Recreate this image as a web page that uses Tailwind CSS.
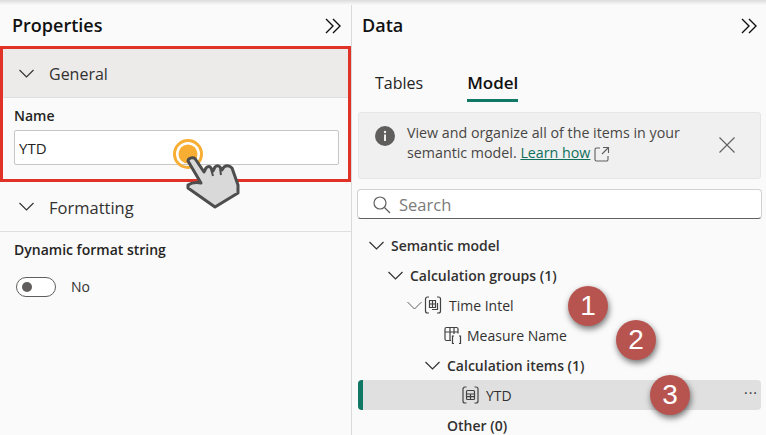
<!DOCTYPE html>
<html lang="en">
  <head>
    <meta charset="UTF-8" />
    <meta name="viewport" content="width=device-width, initial-scale=1.0" />
    <title>Properties and Data panes</title>
    <script src="https://cdn.jsdelivr.net/npm/@tailwindcss/browser@4"></script>
  </head>
  <body class="relative h-[435px] w-[766px] overflow-hidden bg-[#fafafa] font-['Open_Sans','Liberation_Sans',sans-serif] text-[#252423]">
    <!-- top window shadow -->
    <div class="absolute inset-x-0 top-0 h-[5px] bg-gradient-to-b from-[#dcdcdc] to-[#fafafa]"></div>

    <div class="flex h-full">
      <!-- Properties pane -->
      <aside class="h-full w-[352px] shrink-0 border-r border-[#d9d9d9]">
        <header class="flex h-[46px] items-end justify-between pb-[9px] pl-3 pr-[10px]">
          <h2 class="text-[18px] leading-6 font-semibold text-[#111]">Properties</h2>
          <svg class="mb-[3px]" width="16" height="16" viewBox="0 0 16 16" fill="none" stroke="#111" stroke-width="1.4"><path d="M1 1l7 7-7 7M8 1l7 7-7 7"/></svg>
        </header>

        <section class="h-[136px] border-[3px] border-[#e03226]">
          <div class="flex h-[49px] items-center gap-[15px] border-b border-[#e1dfdd] bg-[#edebe9] pl-4">
            <svg width="15" height="9" viewBox="0 0 15 9" fill="none" stroke="#323130" stroke-width="1.1"><path d="M.5 1l7 7 7-7"/></svg>
            <span class="pt-[1px] text-[16px] leading-6 text-[#323130]">General</span>
          </div>
          <div class="px-[11px] pt-[8px]">
            <label class="block text-[14px] leading-[19px] font-semibold text-[#252423]">Name</label>
            <input value="YTD" class="mt-[5px] block h-[35px] w-[325px] rounded-[2px] border border-[#c8c6c4] bg-white px-[4px] text-[15px] text-[#252423]" />
          </div>
        </section>

        <div class="flex h-[50px] items-center gap-[15px] border-b border-[#dfdfdf] pl-[19px]">
          <svg width="15" height="9" viewBox="0 0 15 9" fill="none" stroke="#323130" stroke-width="1.1"><path d="M.5 1l7 7 7-7"/></svg>
          <span class="pt-[2px] text-[16.500px] leading-6 text-[#323130]">Formatting</span>
        </div>

        <div class="px-[14px] pt-[7px]">
          <div class="text-[14px] leading-[21px] font-semibold text-[#252423]">Dynamic format string</div>
          <div class="mt-[17px] flex items-center gap-[15px] pl-[2px]">
            <div class="flex h-5 w-10 items-center rounded-full border border-[#605e5c] bg-white pl-[5px]">
              <span class="h-[10px] w-[10px] rounded-full bg-[#605e5c]"></span>
            </div>
            <span class="text-[14px] leading-5 text-[#323130]">No</span>
          </div>
        </div>
      </aside>

      <!-- Data pane -->
      <main class="h-full flex-1">
        <header class="flex h-[46px] items-end justify-between pb-[9px] pl-[10px] pr-[10px]">
          <h2 class="text-[18px] leading-6 font-semibold text-[#111]">Data</h2>
          <svg class="mb-[3px]" width="16" height="16" viewBox="0 0 16 16" fill="none" stroke="#111" stroke-width="1.4"><path d="M1 1l7 7-7 7M8 1l7 7-7 7"/></svg>
        </header>

        <nav class="mt-[25px] flex h-[31px] gap-[44px] pl-[23px]">
          <div class="text-[16px] leading-6 text-[#252423]">Tables</div>
          <div class="h-[31px] border-b-[3px] border-[#117865] text-[17px] leading-6 font-semibold text-[#111]">Model</div>
        </nav>

        <div class="mx-[6px] mt-[10px] flex h-[67px] w-[403px] rounded-[3px] border border-[#e6e6e6] bg-[#f0f0f0] pl-4 pt-[10px]">
          <svg class="mt-[3px] shrink-0" width="20" height="20" viewBox="0 0 20 20"><circle cx="10" cy="10" r="10" fill="#605e5c"/><rect x="9" y="8.500" width="2" height="6.500" fill="#f0f0f0"/><circle cx="10" cy="6" r="1.200" fill="#f0f0f0"/></svg>
          <p class="ml-[12px] w-[296px] text-[14.250px] leading-[20px] text-[#484644]">
            View and organize all of the items in your semantic model.
            <a class="text-[#0f6f5c] underline">Learn how</a>
            <svg class="inline-block align-[-4px]" width="16" height="16" viewBox="0 0 16 16" fill="none" stroke="#605e5c" stroke-width="1.1"><path d="M6 2H2.500A1.500 1.500 0 0 0 1 3.500v10A1.500 1.500 0 0 0 2.500 15h10a1.500 1.500 0 0 0 1.500-1.500V10M9 1.500h5.500V7M14.500 1.500L8 8"/></svg>
          </p>
          <svg class="ml-[16px] mt-[14px] shrink-0" width="16" height="16" viewBox="0 0 16 16" fill="none" stroke="#605e5c" stroke-width="1.1"><path d="M.5.500l15 15M15.500.500l-15 15"/></svg>
        </div>

        <div class="mx-[5px] mt-[10px] flex h-[30px] w-[405px] items-center rounded-[4px] border border-[#d1d1d1] border-b-[#616161] bg-white pl-[15px]">
          <svg class="mt-[1px]" width="18" height="18" viewBox="0 0 18 18" fill="none" stroke="#605e5c" stroke-width="1.200"><circle cx="7" cy="7" r="6"/><path d="M11.500 11.500L17 17"/></svg>
          <span class="ml-[8px] pt-[2px] text-[16.500px] leading-6 text-[#7a7a7a]">Search</span>
        </div>

        <!-- model tree, 30px rows -->
        <ul class="mt-[11px] text-[14px] text-[#323130]">
          <li class="flex h-[30px] items-center pl-[17px] font-semibold">
            <svg class="mr-[7px]" width="15" height="9" viewBox="0 0 15 9" fill="none" stroke="#323130" stroke-width="1.2"><path d="M.5 1l7 7 7-7"/></svg>
            Semantic model
          </li>
          <li class="flex h-[30px] items-center pl-[36px] font-semibold">
            <svg class="mr-[7px]" width="15" height="9" viewBox="0 0 15 9" fill="none" stroke="#323130" stroke-width="1.2"><path d="M.5 1l7 7 7-7"/></svg>
            Calculation groups (1)
          </li>
          <li class="flex h-[30px] items-center pl-[55px]">
            <svg class="mr-[2px]" width="15" height="9" viewBox="0 0 15 9" fill="none" stroke="#605e5c" stroke-width="1"><path d="M.5 1l7 7 7-7"/></svg>
            <svg class="mr-[7px]" width="18" height="20" viewBox="0 0 18 20" fill="none" stroke="#424242" stroke-width="1.200"><path d="M5 2H3.500A2 2 0 0 0 1.500 4v12a2 2 0 0 0 2 2H5M13 2h1.500a2 2 0 0 1 2 2v12a2 2 0 0 1-2 2H13"/><path d="M5.500 5.500h6v7h-6zM5.500 9h6M8.500 5.500v7"/><path d="M13.500 8v6.500H8"/></svg>
            Time Intel
          </li>
          <li class="flex h-[30px] items-center pl-[92px]">
            <svg class="mr-[5px]" width="18" height="19" viewBox="0 0 18 19" fill="none" stroke="#424242" stroke-width="1.200"><path d="M7 14.500H2.500A1.500 1.500 0 0 1 1 13V3a1.500 1.500 0 0 1 1.500-1.500h10A1.500 1.500 0 0 1 14 3v4.500M1 6h13M6 1.500v13M10 1.500V8"/><path d="M10 10H8.500v7.500H10M15 10h1.500v7.500H15"/></svg>
            Measure Name
          </li>
          <li class="flex h-[30px] items-center pl-[73px] font-semibold">
            <svg class="mr-[7px]" width="15" height="9" viewBox="0 0 15 9" fill="none" stroke="#323130" stroke-width="1.2"><path d="M.5 1l7 7 7-7"/></svg>
            Calculation items (1)
          </li>
          <li class="relative ml-[6px] flex h-[30px] w-[403px] items-center overflow-hidden rounded-[4px] bg-[#e0e0e0] pl-[104px]">
            <span class="absolute inset-y-0 left-0 w-[5px] bg-[#117865]"></span>
            <svg class="mr-[7px]" width="17" height="20" viewBox="0 0 17 20" fill="none" stroke="#424242" stroke-width="1.200"><path d="M4.500 2H3A2 2 0 0 0 1 4v12a2 2 0 0 0 2 2h1.500M12.500 2H14a2 2 0 0 1 2 2v12a2 2 0 0 1-2 2h-1.500"/><rect x="4.500" y="5.500" width="8" height="9" rx="1"/><path d="M4.500 9h8M4.500 11.700h8M8.500 9v5.500"/></svg>
            YTD
            <span class="absolute right-[3px] top-[5px] text-[14px] leading-4 tracking-[1px] text-[#323130]">···</span>
          </li>
          <li class="flex h-[30px] items-center pl-[95px] font-semibold">Other (0)</li>
        </ul>
      </main>
    </div>

    <!-- numbered callouts -->
    <div class="absolute left-[568px] top-[286px] flex h-10 w-10 items-center justify-center rounded-full bg-[#b85450] font-['Liberation_Sans',sans-serif] text-[28px] text-white shadow-[1px_3px_6px_rgba(0,0,0,0.55)]">1</div>
    <div class="absolute left-[616px] top-[320px] flex h-10 w-10 items-center justify-center rounded-full bg-[#b85450] font-['Liberation_Sans',sans-serif] text-[28px] text-white shadow-[1px_3px_6px_rgba(0,0,0,0.55)]">2</div>
    <div class="absolute left-[650px] top-[375px] flex h-10 w-10 items-center justify-center rounded-full bg-[#b85450] font-['Liberation_Sans',sans-serif] text-[28px] text-white shadow-[1px_3px_6px_rgba(0,0,0,0.55)]">3</div>

    <!-- click pointer -->
    <svg class="absolute left-[170px] top-[138px]" width="72" height="72" viewBox="0 0 72 72">
      <circle cx="18" cy="16" r="13.500" fill="none" stroke="#f7ae33" stroke-width="3"/>
      <circle cx="18" cy="16" r="9.500" fill="#f7ae33"/>
      <path d="M18 23c0-3 6-5 8-1l8 12 2-4c2-2 4-2 5 0l2 3 2-4c2-2 4-1 5 0l2 3 2-3c3-2 6-1 8 1l6 17v8L45 69 18 50v-3c3-2 8-3 13-2z" fill="#d9d9d9" stroke="#4d4d4d" stroke-width="3" stroke-linejoin="round"/>
      <path d="M41 31l2 7M50 30l1 7" fill="none" stroke="#4d4d4d" stroke-width="2"/>
    </svg>
  </body>
</html>
